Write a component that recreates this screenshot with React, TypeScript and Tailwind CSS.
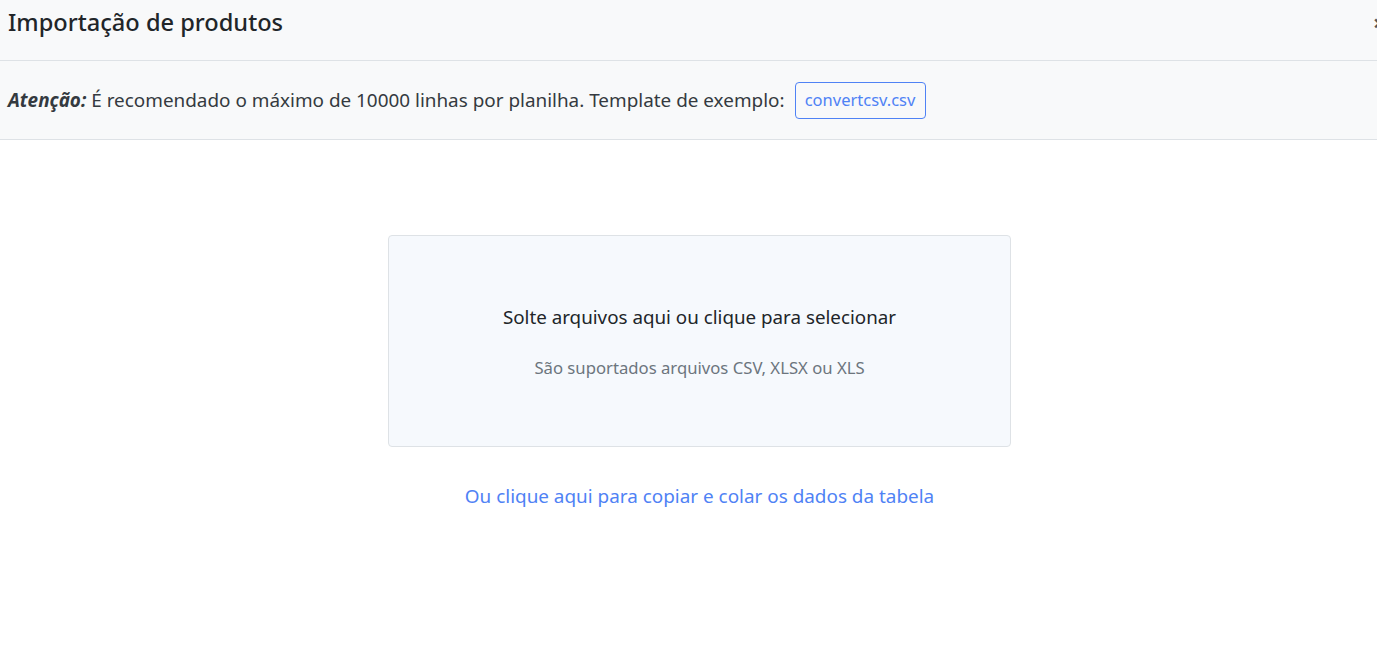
import React from "react";

export default function App() {
  return (
    <div className="w-[1377px] h-[662px] overflow-hidden bg-white text-[#212529]" style={{ fontFamily: '"Noto Sans", "Open Sans", sans-serif' }}>
      <div className="flex items-start justify-between h-[61px] bg-[#f8f9fa] border-b border-[#dee2e6] pl-2">
        <h1 className="text-[23.6px] leading-[44px] font-medium text-[#212529]">Importação de produtos</h1>
        <button className="mt-[10px] mr-[-9px] w-[13px] text-left text-[22px] leading-[24px] font-bold text-[#555]">×</button>
      </div>
      <div className="flex items-center h-[79px] bg-[#f8f9fa] border-b border-[#dee2e6] pl-2 text-[18.9px] text-[#343a40]">
        <span>
          <b className="italic font-bold">Atenção:</b> É recomendado o máximo de 10000 linhas por planilha. Template de exemplo:
        </span>
        <button className="ml-[10px] h-[37px] w-[131px] rounded-[4px] border border-[#4f82f5] text-[#4f82f5] text-[16.5px]">
          convertcsv.csv
        </button>
      </div>
      <div className="flex flex-col items-center pt-[95px] pl-[22px]">
        <div className="w-[623px] h-[212px] flex flex-col items-center justify-center rounded-[4px] border border-[#dee2e6] bg-[#f6f9fd]">
          <div className="text-[18.8px] leading-[28px] text-[#212529]">Solte arquivos aqui ou clique para selecionar</div>
          <div className="text-[16.7px] leading-[25px] text-[#6c757d] mt-[24px]">São suportados arquivos CSV, XLSX ou XLS</div>
        </div>
        <div className="mt-[35px] text-[18.9px] text-[#4f82f5]">Ou clique aqui para copiar e colar os dados da tabela</div>
      </div>
    </div>
  );
}
